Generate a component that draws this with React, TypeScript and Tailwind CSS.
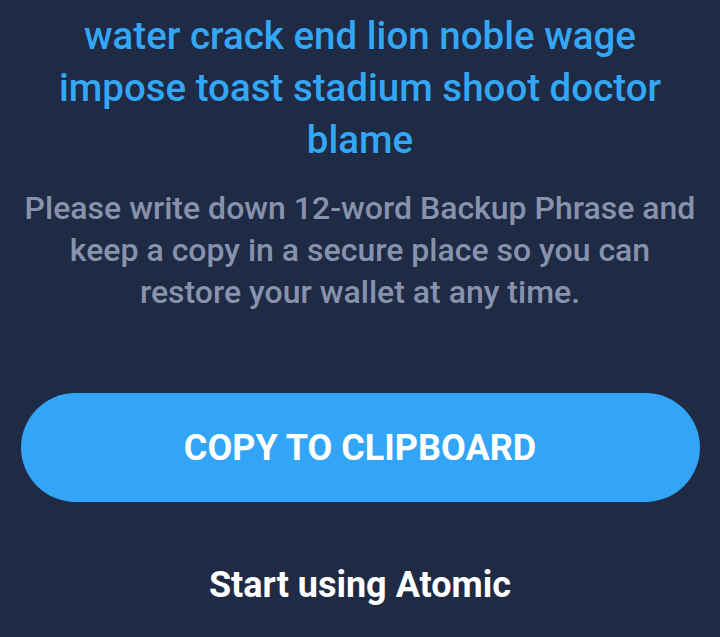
export default function App() {
    return (
        <div className="w-[720px] h-[637px] bg-[#1f2a44] overflow-hidden flex flex-col items-center text-center font-['Roboto',sans-serif]">
            {/* Backup phrase */}
            <p className="mt-[10px] px-[40px] text-[38.5px] leading-[52px] font-medium text-[#33a7f5]">
                water crack end lion noble wage impose toast stadium shoot doctor blame
            </p>

            {/* Hint */}
            <p className="mt-[21px] px-[20px] text-[32px] leading-[42px] font-medium text-[#8793ad]">
                Please write down 12-word Backup Phrase and keep a copy in a secure place so you can restore your wallet at any time.
            </p>

            <button className="mt-[80px] w-[679px] h-[109px] rounded-full bg-[#33a5f7] text-white text-[36px] leading-[44px] font-bold">
                COPY TO CLIPBOARD
            </button>

            <button className="mt-[61px] text-white text-[36px] leading-[44px] font-bold">
                Start using Atomic
            </button>
        </div>
    );
}
